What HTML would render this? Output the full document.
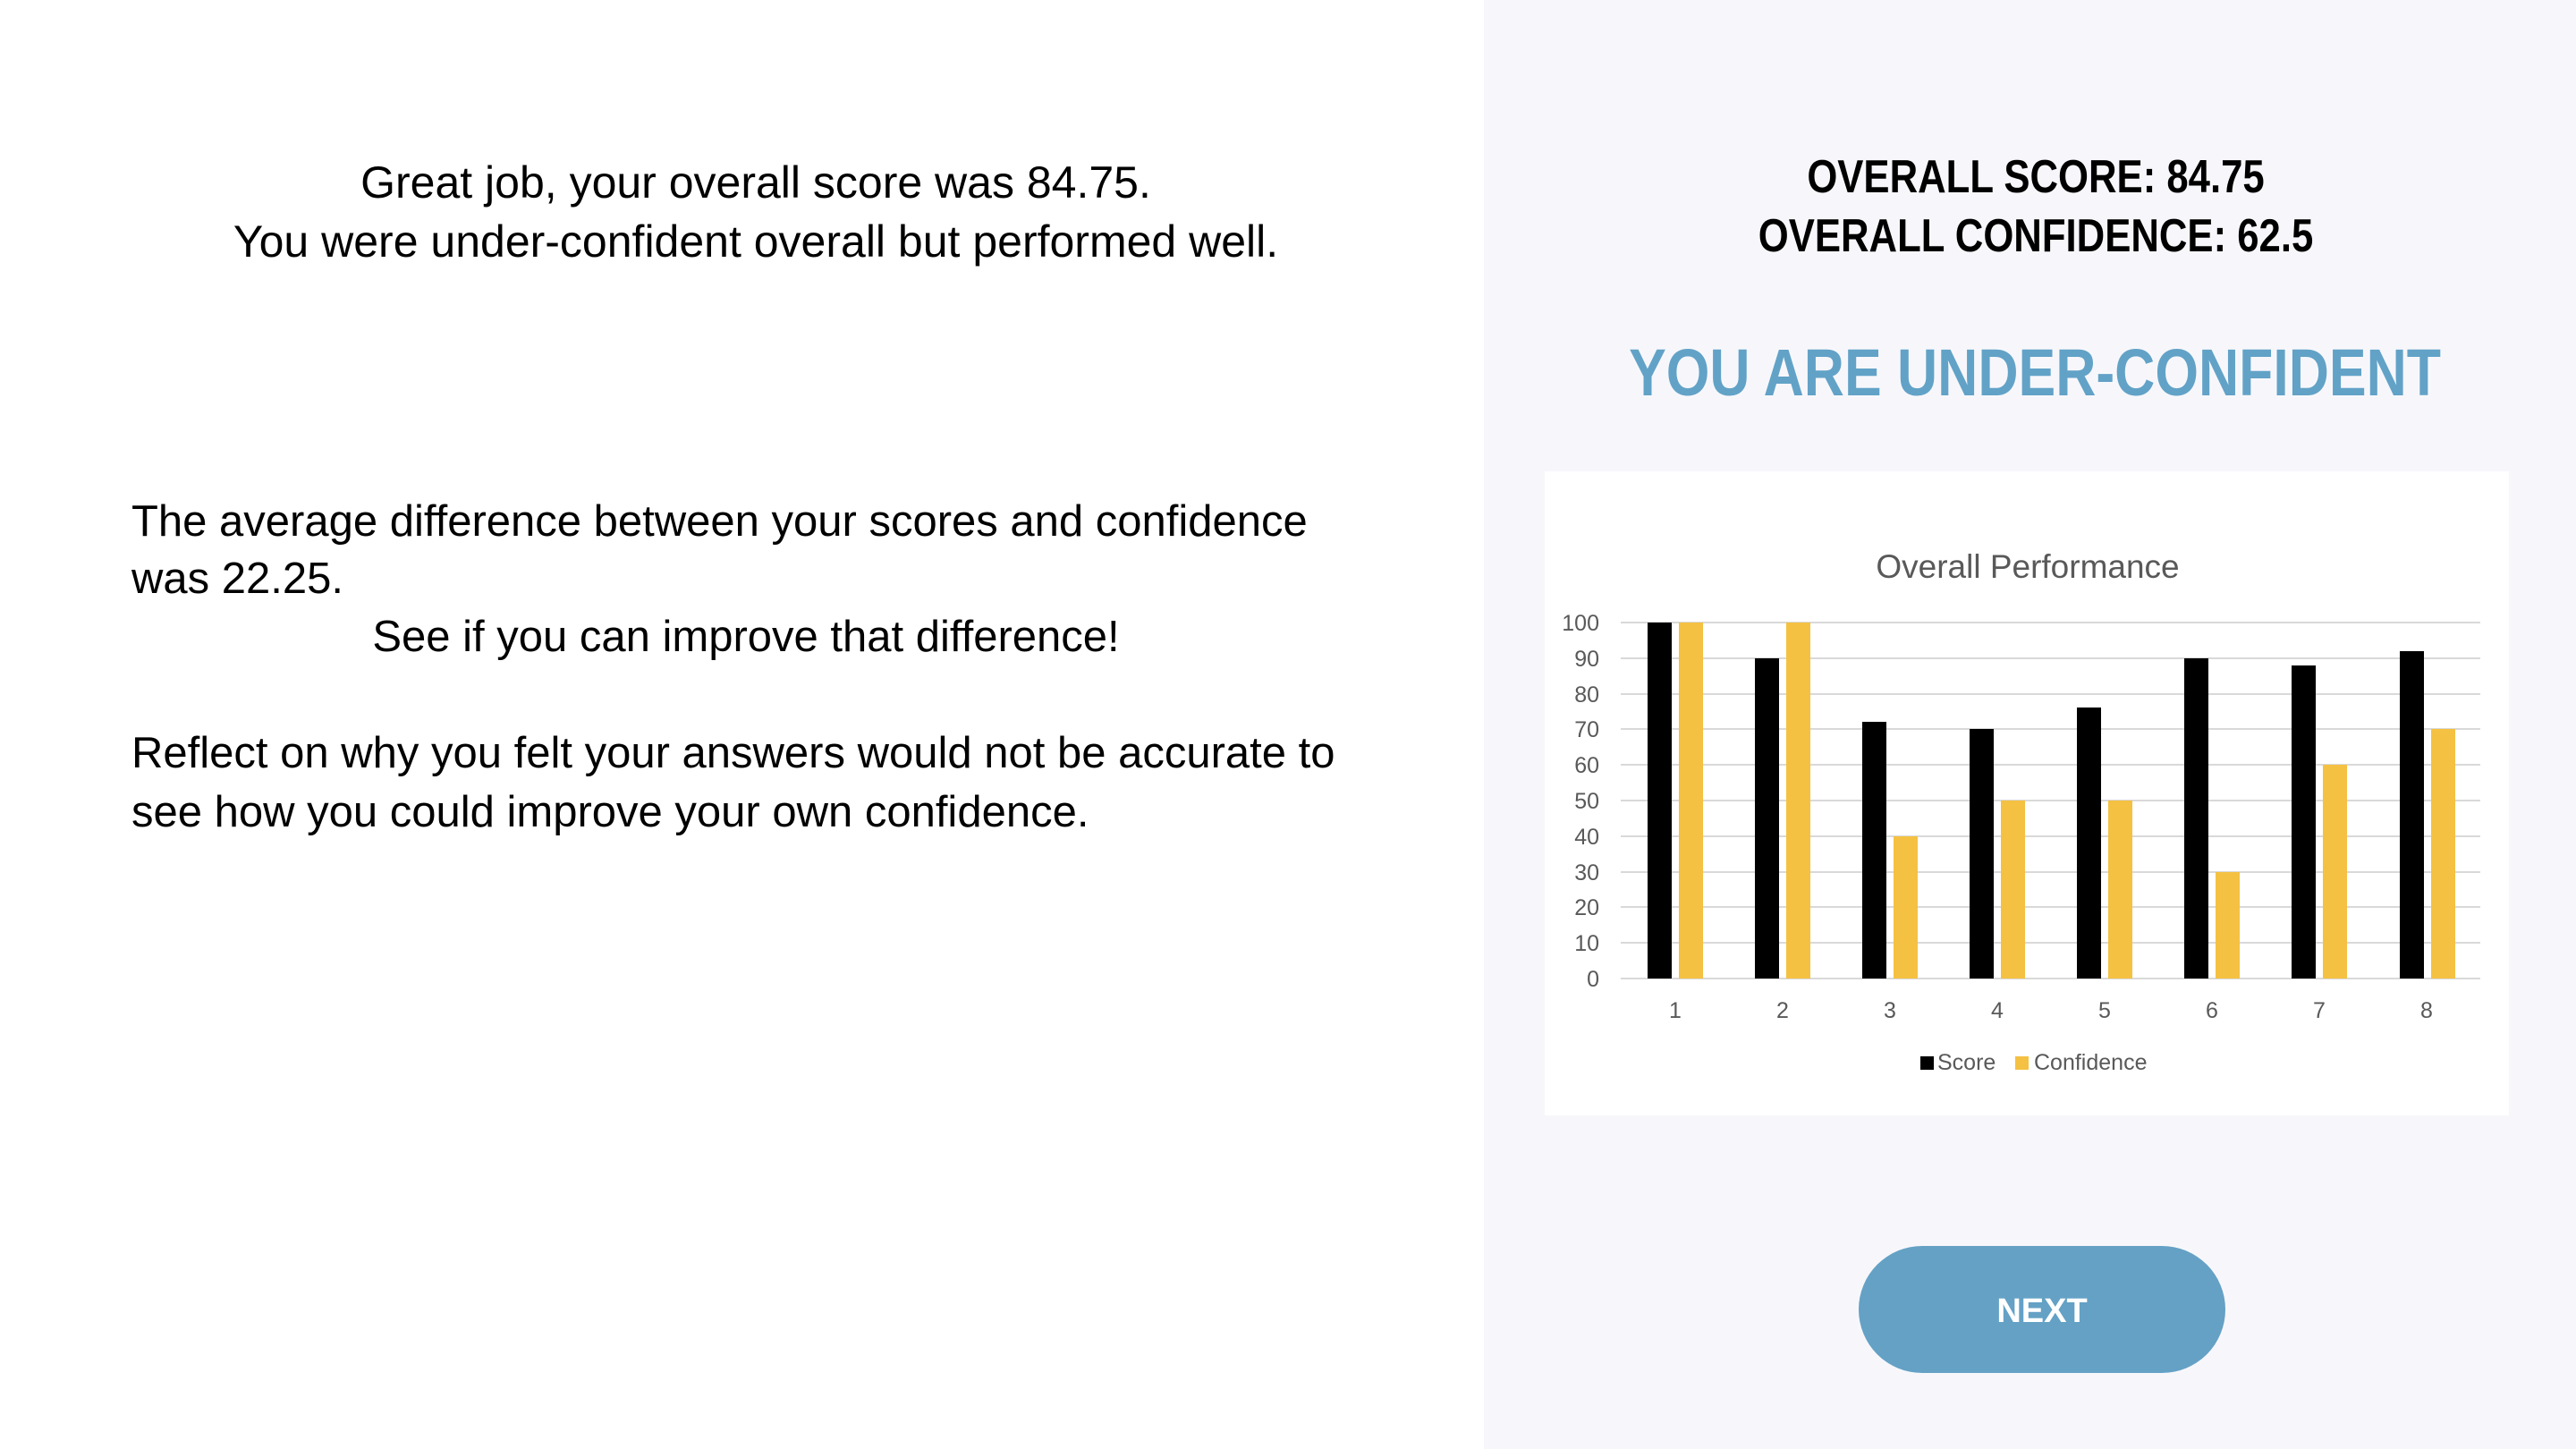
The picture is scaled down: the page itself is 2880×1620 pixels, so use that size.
<!DOCTYPE html>
<html><head><meta charset="utf-8"><style>
html,body{margin:0;padding:0;}
body{width:2880px;height:1620px;position:relative;overflow:hidden;background:#fff;font-family:"Liberation Sans",sans-serif;}
.right{position:absolute;left:1659px;top:0;width:1221px;height:1620px;background:#f7f7fb;}
.t{position:absolute;white-space:nowrap;color:#000;line-height:1;}
.c{transform:translateX(-50%);}
</style></head><body>
<div class="right"></div>

<div class="t c" style="left:845px;top:179px;font-size:50px;">Great job, your overall score was 84.75.</div>
<div class="t c" style="left:845px;top:245px;font-size:50px;">You were under-confident overall but performed well.</div>

<div class="t" style="left:147px;top:559px;font-size:49px;">The average difference between your scores and confidence</div>
<div class="t" style="left:147px;top:623px;font-size:49px;">was 22.25.</div>
<div class="t c" style="left:834px;top:688px;font-size:49px;">See if you can improve that difference!</div>
<div class="t" style="left:147px;top:818px;font-size:49px;">Reflect on why you felt your answers would not be accurate to</div>
<div class="t" style="left:147px;top:884px;font-size:49px;">see how you could improve your own confidence.</div>

<div class="t" style="left:2276px;top:172px;font-size:52px;font-weight:bold;transform:translateX(-50%) scaleX(0.84);">OVERALL SCORE: 84.75</div>
<div class="t" style="left:2276px;top:238px;font-size:52px;font-weight:bold;transform:translateX(-50%) scaleX(0.84);">OVERALL CONFIDENCE: 62.5</div>
<div class="t" style="left:2275px;top:380px;font-size:74px;font-weight:bold;color:#62a2c7;transform:translateX(-50%) scaleX(0.845);">YOU ARE UNDER-CONFIDENT</div>

<div style="position:absolute;left:1727px;top:527px;width:1078px;height:720px;background:#fff;"></div>
<svg style="position:absolute;left:0;top:0" width="2880" height="1620" font-family="Liberation Sans, sans-serif">
<text x="2267" y="646" font-size="37" fill="#595959" text-anchor="middle">Overall Performance</text>
<g stroke="#d9d9d9" stroke-width="2">
<line x1="1812" x2="2773" y1="696" y2="696"/><line x1="1812" x2="2773" y1="736" y2="736"/>
<line x1="1812" x2="2773" y1="776" y2="776"/><line x1="1812" x2="2773" y1="815" y2="815"/>
<line x1="1812" x2="2773" y1="855" y2="855"/><line x1="1812" x2="2773" y1="895" y2="895"/>
<line x1="1812" x2="2773" y1="935" y2="935"/><line x1="1812" x2="2773" y1="975" y2="975"/>
<line x1="1812" x2="2773" y1="1014" y2="1014"/><line x1="1812" x2="2773" y1="1054" y2="1054"/>
<line x1="1812" x2="2773" y1="1094" y2="1094"/>
</g>
<g font-size="25" fill="#595959" text-anchor="end">
<text x="1788" y="705">100</text><text x="1788" y="745">90</text><text x="1788" y="785">80</text>
<text x="1788" y="824">70</text><text x="1788" y="864">60</text><text x="1788" y="904">50</text>
<text x="1788" y="944">40</text><text x="1788" y="984">30</text><text x="1788" y="1023">20</text>
<text x="1788" y="1063">10</text><text x="1788" y="1103">0</text>
</g>
<g fill="#000">
<rect x="1842" y="696" width="27" height="398"/>
<rect x="1962" y="736" width="27" height="358"/>
<rect x="2082" y="807" width="27" height="287"/>
<rect x="2202" y="815" width="27" height="279"/>
<rect x="2322" y="791" width="27" height="303"/>
<rect x="2442" y="736" width="27" height="358"/>
<rect x="2562" y="744" width="27" height="350"/>
<rect x="2683" y="728" width="27" height="366"/>
</g>
<g fill="#f4c142">
<rect x="1877" y="696" width="27" height="398"/>
<rect x="1997" y="696" width="27" height="398"/>
<rect x="2117" y="935" width="27" height="159"/>
<rect x="2237" y="895" width="27" height="199"/>
<rect x="2357" y="895" width="27" height="199"/>
<rect x="2477" y="975" width="27" height="119"/>
<rect x="2597" y="855" width="27" height="239"/>
<rect x="2718" y="815" width="27" height="279"/>
</g>
<g font-size="25" fill="#595959" text-anchor="middle">
<text x="1873" y="1138">1</text><text x="1993" y="1138">2</text><text x="2113" y="1138">3</text>
<text x="2233" y="1138">4</text><text x="2353" y="1138">5</text><text x="2473" y="1138">6</text>
<text x="2593" y="1138">7</text><text x="2713" y="1138">8</text>
</g>
<rect x="2147" y="1181" width="15" height="15" fill="#000"/>
<text x="2166" y="1196" font-size="25" fill="#595959">Score</text>
<rect x="2253" y="1181" width="15" height="15" fill="#f4c142"/>
<text x="2274" y="1196" font-size="25" fill="#595959">Confidence</text>
</svg>

<div style="position:absolute;left:2078px;top:1393px;width:410px;height:142px;border-radius:71px;background:#64a1c5;"></div>
<div class="t c" style="left:2283px;top:1447px;font-size:38px;font-weight:bold;color:#fff;">NEXT</div>
</body></html>
